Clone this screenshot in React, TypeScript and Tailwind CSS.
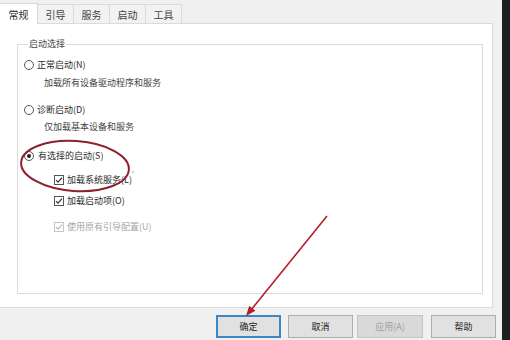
const tabs = ['引导', '服务', '启动', '工具'];

function Radio({ checked }: { checked?: boolean }) {
  return (
    <span className="w-[10px] h-[10px] rounded-full border border-[#555] bg-white flex items-center justify-center shrink-0">
      {checked && <span className="w-[4px] h-[4px] rounded-full bg-[#222]" />}
    </span>
  );
}

function Check({ disabled }: { disabled?: boolean }) {
  const c = disabled ? '#b8b8b8' : '#333';
  return (
    <span
      className={`w-[10px] h-[10px] border bg-white flex items-center justify-center shrink-0 ${
        disabled ? 'border-[#c4c4c4]' : 'border-[#555]'
      }`}
    >
      <svg width="8" height="8" viewBox="0 0 8 8">
        <path d="M1 4.2 L3 6.2 L7 1.6" fill="none" stroke={c} strokeWidth="1.2" />
      </svg>
    </span>
  );
}

export default function App() {
  return (
    <div className="relative w-[510px] h-[340px] overflow-hidden bg-[#f0f0f0] flex font-['Noto_Sans_CJK_SC',sans-serif] text-[9px] text-[#2b2b2b]">
      <div className="w-[502px] flex flex-col">
        {/* tab strip */}
        <div className="h-[23px] flex items-end">
          <div className="relative z-10 w-[38px] h-[21px] -mb-px bg-white border-r border-t border-[#dadada] flex items-center justify-center text-[10px]">
            常规
          </div>
          {tabs.map((t) => (
            <div
              key={t}
              className="w-[36px] h-[19px] border-r border-t border-[#dadada] bg-[#f2f2f2] flex items-center justify-center text-[10px] text-[#444]"
            >
              {t}
            </div>
          ))}
        </div>

        {/* panel */}
        <div className="w-[494px] h-[285px] -ml-px bg-white border border-[#dadada] pt-[14px] pl-[17px] pr-[9px] pb-[13px] flex">
          <fieldset className="flex-1 border border-[#dcdcdc] pl-[6px]">
            <legend className="ml-[4px] px-[1px] leading-[12px] text-[#444]">启动选择</legend>
            <div className="flex flex-col leading-[14px]">
              <div className="mt-[8px] flex items-center gap-[3px]">
                <Radio />
                <span>正常启动(N)</span>
              </div>
              <div className="mt-[4px] pl-[20px] text-[#444]">加载所有设备驱动程序和服务</div>
              <div className="mt-[13px] flex items-center gap-[3px]">
                <Radio />
                <span>诊断启动(D)</span>
              </div>
              <div className="mt-[3px] pl-[20px] text-[#444]">仅加载基本设备和服务</div>
              <div className="mt-[15px] flex items-center gap-[4px]">
                <Radio checked />
                <span>有选择的启动(S)</span>
              </div>
              <div className="mt-[10px] pl-[30px] flex items-center gap-[3px]">
                <Check />
                <span>加载系统服务(L)</span>
              </div>
              <div className="mt-[7px] pl-[30px] flex items-center gap-[3px]">
                <Check />
                <span>加载启动项(O)</span>
              </div>
              <div className="mt-[12px] pl-[30px] flex items-center gap-[3px] text-[#a8a8a8]">
                <Check disabled />
                <span>使用原有引导配置(U)</span>
              </div>
            </div>
          </fieldset>
        </div>

        {/* buttons */}
        <div className="pt-[7px] flex">
          <button className="ml-[216px] w-[65px] h-[23px] bg-[#e1e1e1] border-2 border-[#3a86c8] text-[#222]">确定</button>
          <button className="ml-[7px] w-[65px] h-[23px] bg-[#e1e1e1] border border-[#adadad] text-[#222]">取消</button>
          <button className="ml-[4px] w-[66px] h-[23px] bg-[#d9d9d9] border border-[#c4c4c4] text-[#a0a0a0]">应用(A)</button>
          <button className="ml-[8px] w-[65px] h-[23px] bg-[#e1e1e1] border border-[#adadad] text-[#222]">帮助</button>
        </div>
      </div>

      {/* window edge */}
      <div className="w-[8px] bg-[#1f1f1f]" />

      {/* red annotations */}
      <svg className="absolute inset-0 pointer-events-none" width="510" height="340" viewBox="0 0 510 340">
        <ellipse cx="75" cy="166" rx="54" ry="25" transform="rotate(4 75 166)" fill="none" stroke="#8e1f2c" strokeWidth="2" />
        <line x1="327" y1="216" x2="251" y2="310" stroke="#b0202e" strokeWidth="1.6" />
        <polygon points="246,316 255.4,310.7 249.2,305.7" fill="#b0202e" />
        <circle cx="133" cy="172" r="0.8" fill="#999" />
      </svg>
    </div>
  );
}
